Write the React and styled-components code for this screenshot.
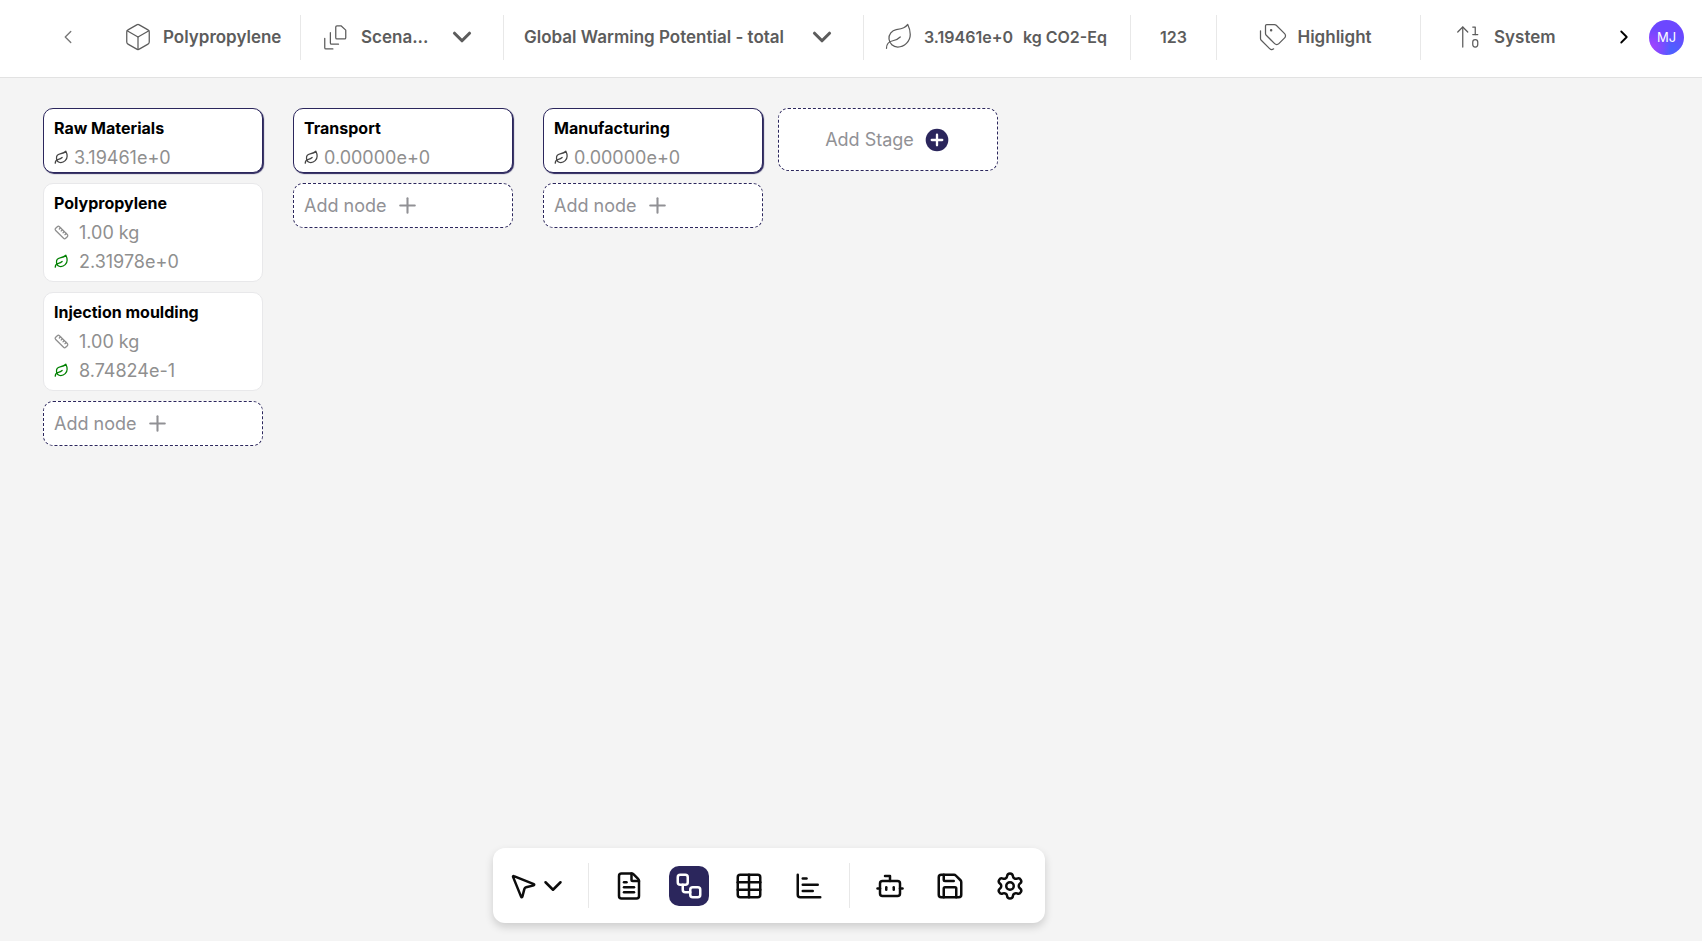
import { useState } from "react";
import styled, { createGlobalStyle, css } from "styled-components";
import {
  ArrowUp10,
  Bot,
  Box,
  ChartBar,
  ChevronDown,
  ChevronLeft,
  ChevronRight,
  FileText,
  Leaf,
  MousePointer2,
  Plus,
  Ruler,
  Save,
  Settings,
  Table,
  Tags,
  Workflow,
} from "lucide-react";

const GlobalStyle = createGlobalStyle`
  * {
    box-sizing: border-box;
  }

  body {
    margin: 0;
    background-color: #f4f4f4;
    font-family: Inter, "Liberation Sans", sans-serif;
    font-size: 18px;
    color: #8f8f8f;
  }

  button,
  select {
    margin: 0;
    padding: 0;
    border: none;
    background: none;
    font: inherit;
    color: inherit;
    cursor: pointer;
  }

  svg {
    display: block;
    flex-shrink: 0;
  }
`;

const Page = styled.div`
  min-height: 100vh;
  display: flex;
  flex-direction: column;
`;

const HeaderWrap = styled.header`
  height: 78px;
  padding: 0 18px 3px 53px;
  display: flex;
  align-items: center;
  background-color: #ffffff;
  border-bottom: 1px solid #e2e2e2;
`;

const Sections = styled.div`
  flex: 1;
  min-width: 0;
  margin-left: 20px;
  display: flex;
  overflow: hidden;
  color: #5c5c5c;
  font-size: 17px;
  font-weight: 600;
`;

const Section = styled.div`
  flex: 0 0 ${(props) => props.$width}px;
  min-width: 0;
  height: 45px;
  padding: 0 20px;
  display: flex;
  align-items: center;
  justify-content: ${(props) => (props.$center ? "center" : "flex-start")};
  gap: 10px;
  white-space: nowrap;
  border-right: ${(props) => (props.$last ? "none" : "1px solid #e8e8e8")};
`;

const SectionSelect = styled.select`
  flex: 1;
  min-width: 0;
  appearance: none;
  outline: none;
`;

const SelectArrow = styled.span`
  margin-right: 6px;
  pointer-events: none;
`;

const Figure = styled.span`
  font-size: 16px;
`;

const SectionButton = styled.button`
  min-width: 122px;
  display: flex;
  align-items: center;
  gap: 10px;
`;

const ArrowButton = styled.button`
  width: 30px;
  height: 30px;
  display: flex;
  align-items: center;
  justify-content: center;
  color: ${(props) => (props.$muted ? "#777777" : "#000000")};
`;

const Avatar = styled.button`
  width: 35px;
  height: 35px;
  margin-left: 10px;
  border-radius: 50%;
  background: radial-gradient(circle at 10% 75%, #a044ff 0%, transparent 45%),
    radial-gradient(circle at 65% 85%, #4a63ff 0%, transparent 50%), #6c47ff;
  color: #ffffff;
  font-size: 13px;
`;

const Board = styled.main`
  padding: 30px 28px;
  display: flex;
  align-items: flex-start;
`;

const Column = styled.section`
  flex: 0 0 220px;
  margin: 0 15px;
  display: flex;
  flex-direction: column;
  gap: 10px;

  &:nth-last-child(2) {
    margin-right: 0;
  }
`;

const Card = styled.article`
  padding: 5px 10px;
  border: 1px solid #e8e8ea;
  border-radius: 10px;
  background-color: #ffffff;
  line-height: 29px;
  cursor: pointer;

  ${(props) =>
    props.$stage &&
    css`
      padding-bottom: 0;
      border-color: #2b265c;
      box-shadow: 1px 1px 1px #2b265c;
    `}
`;

const CardTitle = styled.h2`
  margin: 0;
  color: #000000;
  font-size: 16px;
  font-weight: 700;
  line-height: 29px;
`;

const CardRow = styled.div`
  display: flex;
  align-items: center;
  gap: ${(props) => props.$gap}px;

  svg {
    color: ${(props) => props.$iconColor};
  }
`;

const DashedButton = styled.button`
  height: 45px;
  padding: 0 10px;
  display: flex;
  align-items: center;
  gap: 9px;
  border: 1px dashed #2b265c;
  border-radius: 10px;
  background-color: #ffffff;
  color: #919195;
`;

const AddStageButton = styled(DashedButton)`
  flex: 0 0 220px;
  height: 63px;
  margin-left: 15px;
  justify-content: center;
`;

const ToolbarWrap = styled.footer`
  position: sticky;
  bottom: 0;
  margin-top: auto;
  padding: 0 164px 18px 0;
  display: flex;
  justify-content: center;
`;

const Toolbar = styled.nav`
  height: 75px;
  padding: 0 15px;
  display: flex;
  align-items: center;
  gap: 20px;
  border-radius: 12px;
  background-color: #ffffff;
  box-shadow: 0 4px 8px rgba(0, 0, 0, 0.16);
  color: #0c0c0c;
`;

const PointerButton = styled.button`
  display: flex;
  align-items: center;
`;

const ToolButton = styled.button`
  width: 40px;
  height: 40px;
  display: flex;
  align-items: center;
  justify-content: center;
  border-radius: 10px;
  background-color: ${(props) => (props.$active ? "#2b265c" : "transparent")};
  color: ${(props) => (props.$active ? "#ffffff" : "inherit")};
`;

const ToolDivider = styled.span`
  width: 1px;
  height: 45px;
  background-color: #e8e8e8;
`;

const stages = [
  {
    name: "Raw Materials",
    impact: "3.19461e+0",
    nodes: [
      { name: "Polypropylene", amount: "1.00 kg", impact: "2.31978e+0" },
      { name: "Injection moulding", amount: "1.00 kg", impact: "8.74824e-1" },
    ],
  },
  { name: "Transport", impact: "0.00000e+0", nodes: [] },
  { name: "Manufacturing", impact: "0.00000e+0", nodes: [] },
];

const views = [
  { id: "report", label: "Report", icon: FileText },
  { id: "flow", label: "Flow", icon: Workflow },
  { id: "table", label: "Table", icon: Table },
  { id: "chart", label: "Chart", icon: ChartBar },
];

const actions = [
  { id: "assistant", label: "Assistant", icon: Bot },
  { id: "save", label: "Save", icon: Save },
  { id: "settings", label: "Settings", icon: Settings },
];

function ScenarioIcon() {
  return (
    <svg
      width="30"
      height="30"
      viewBox="0 0 24 24"
      fill="none"
      stroke="currentColor"
      strokeWidth="1"
      strokeLinecap="round"
      strokeLinejoin="round"
    >
      <path d="M16 3h-3.200a1 1 0 0 0-1 1v8.500a1 1 0 0 0 1 1h6a1 1 0 0 0 1-1V6.500Z" />
      <path d="M7.500 8.500v8.200a1 1 0 0 0 1 1H14" />
      <path d="M3 13v7.500a1 1 0 0 0 1 1h5.500" />
    </svg>
  );
}

function AddCircleIcon() {
  return (
    <svg width="28" height="28" viewBox="0 0 24 24">
      <circle cx="12" cy="12" r="9.700" fill="#2b265c" />
      <path
        d="M12 7.500v9M7.500 12h9"
        stroke="#ffffff"
        strokeWidth="2"
        strokeLinecap="round"
      />
    </svg>
  );
}

function Header() {
  return (
    <HeaderWrap>
      <ArrowButton $muted aria-label="Back">
        <ChevronLeft size={22} strokeWidth={1.5} />
      </ArrowButton>
      <Sections>
        <Section $width={198}>
          <Box size={30} strokeWidth={1} />
          Polypropylene
        </Section>
        <Section $width={203}>
          <ScenarioIcon />
          <SectionSelect aria-label="Scenario">
            <option>Scena...</option>
          </SectionSelect>
          <SelectArrow>
            <ChevronDown size={30} strokeWidth={2.5} />
          </SelectArrow>
        </Section>
        <Section $width={360}>
          <SectionSelect aria-label="Impact category">
            <option>Global Warming Potential - total</option>
          </SectionSelect>
          <SelectArrow>
            <ChevronDown size={30} strokeWidth={2.5} />
          </SelectArrow>
        </Section>
        <Section $width={267}>
          <Leaf size={30} strokeWidth={1} />
          <Figure>3.19461e+0</Figure>
          <Figure>kg CO2-Eq</Figure>
        </Section>
        <Section $width={86} $center>
          <Figure>123</Figure>
        </Section>
        <Section $width={204} $center>
          <SectionButton>
            <Tags size={30} strokeWidth={1} />
            Highlight
          </SectionButton>
        </Section>
        <Section $width={188} $center $last>
          <SectionButton>
            <ArrowUp10 size={30} strokeWidth={1} />
            System
          </SectionButton>
        </Section>
      </Sections>
      <ArrowButton aria-label="Next">
        <ChevronRight size={22} />
      </ArrowButton>
      <Avatar>MJ</Avatar>
    </HeaderWrap>
  );
}

function NodeCard(props) {
  const { node } = props;

  return (
    <Card>
      <CardTitle>{node.name}</CardTitle>
      <CardRow $gap={10} $iconColor="#8f8f8f">
        <Ruler size={15} />
        {node.amount}
      </CardRow>
      <CardRow $gap={10} $iconColor="#008000">
        <Leaf size={15} />
        {node.impact}
      </CardRow>
    </Card>
  );
}

function StageColumn(props) {
  const { stage } = props;

  return (
    <Column>
      <Card $stage>
        <CardTitle>{stage.name}</CardTitle>
        <CardRow $gap={5} $iconColor="#444444">
          <Leaf size={15} />
          {stage.impact}
        </CardRow>
      </Card>
      {stage.nodes.map((node) => (
        <NodeCard key={node.name} node={node} />
      ))}
      <DashedButton>
        Add node
        <Plus size={25} strokeWidth={2} />
      </DashedButton>
    </Column>
  );
}

function App() {
  const [view, setView] = useState("flow");

  return (
    <Page>
      <GlobalStyle />
      <Header />
      <Board>
        {stages.map((stage) => (
          <StageColumn key={stage.name} stage={stage} />
        ))}
        <AddStageButton>
          Add Stage
          <AddCircleIcon />
        </AddStageButton>
      </Board>
      <ToolbarWrap>
        <Toolbar>
          <PointerButton aria-label="Pointer">
            <MousePointer2 size={30} />
            <ChevronDown size={30} />
          </PointerButton>
          <ToolDivider />
          {views.map(({ id, label, icon: Icon }) => (
            <ToolButton
              key={id}
              aria-label={label}
              $active={view === id}
              onClick={() => setView(id)}
            >
              <Icon size={30} />
            </ToolButton>
          ))}
          <ToolDivider />
          {actions.map(({ id, label, icon: Icon }) => (
            <ToolButton key={id} aria-label={label}>
              <Icon size={30} />
            </ToolButton>
          ))}
        </Toolbar>
      </ToolbarWrap>
    </Page>
  );
}

export default App;
